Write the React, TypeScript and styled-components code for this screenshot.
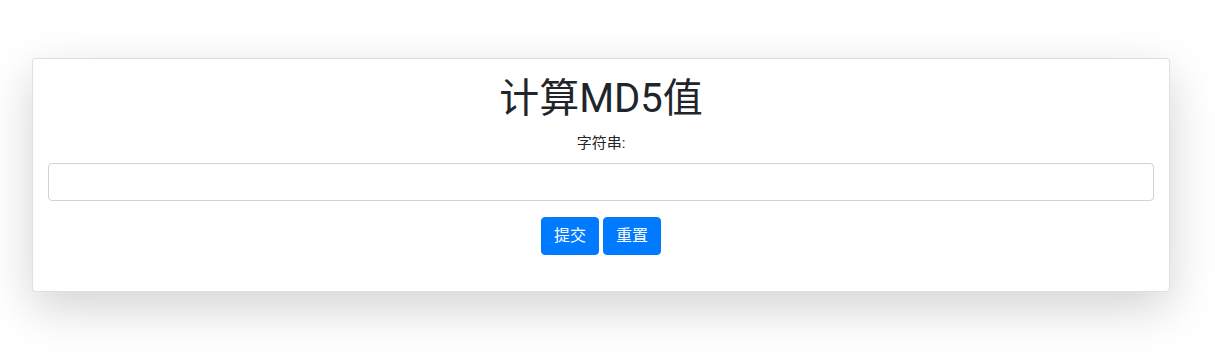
import React from "react";
import styled, { createGlobalStyle } from "styled-components";

const GlobalStyle = createGlobalStyle`
  body {
    margin: 0;
    background: #ffffff;
    color: #212529;
    font-family: Roboto, "Noto Sans CJK SC", "Liberation Sans", sans-serif;
    font-size: 16px;
    line-height: 1.5;
  }
  * { box-sizing: border-box; }
`;

const Page = styled.div`
  min-height: 100vh;
  padding: 58px 45px 0 32px;
`;

const Card = styled.div`
  background: #ffffff;
  border: 1px solid rgba(0, 0, 0, 0.125);
  border-radius: 4px;
  box-shadow: 0 16px 48px rgba(0, 0, 0, 0.175);
  padding: 16px 15px 16px 15px;
`;

const Title = styled.h1`
  margin: 0 0 8px 0;
  font-size: 40px;
  font-weight: 400;
  line-height: 1.2;
  text-align: center;
`;

const FormGroup = styled.div`
  margin-bottom: 16px;
  text-align: center;
`;

const Label = styled.label`
  display: block;
  margin-bottom: 8px;
  font-size: 15px;
  line-height: 24px;
`;

const Input = styled.input`
  display: block;
  width: 100%;
  height: 38px;
  padding: 6px 12px;
  font-size: 16px;
  color: #495057;
  border: 1px solid #ced4da;
  border-radius: 4px;
  outline: none;
`;

const Actions = styled.div`
  display: flex;
  justify-content: center;
  gap: 4px;
  margin-bottom: 20px;
`;

const Button = styled.button`
  height: 38px;
  padding: 6px 12px;
  font-family: inherit;
  font-size: 16px;
  line-height: 24px;
  color: #ffffff;
  background: #007bff;
  border: 1px solid #007bff;
  border-radius: 4px;
  cursor: pointer;
`;

export default function App() {
  return (
    <>
      <GlobalStyle />
      <Page>
        <Card>
          <Title>计算MD5值</Title>
          <FormGroup>
            <Label htmlFor="str">字符串:</Label>
            <Input id="str" type="text" />
          </FormGroup>
          <Actions>
            <Button type="submit">提交</Button>
            <Button type="reset">重置</Button>
          </Actions>
        </Card>
      </Page>
    </>
  );
}
